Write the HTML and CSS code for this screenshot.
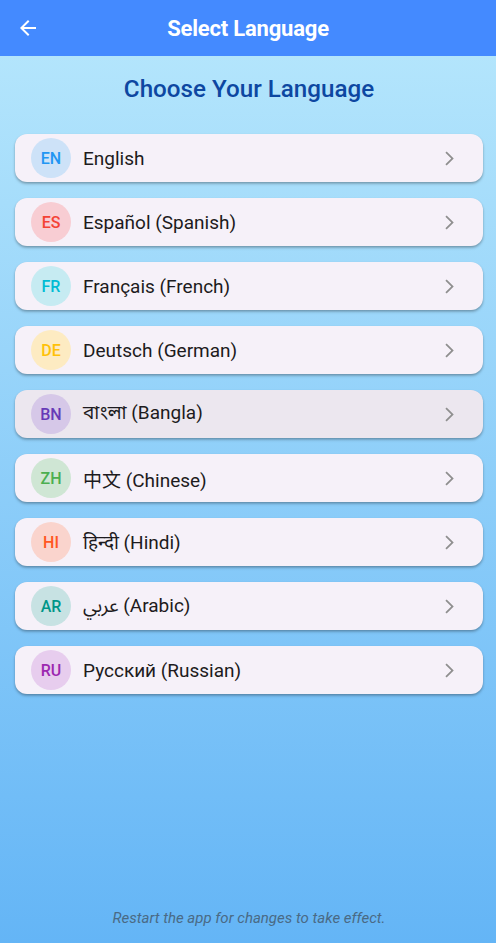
FILE: index.html
```html
<!DOCTYPE html>
<html>
<head>
<meta charset="utf-8">
<link rel="stylesheet" href="styles.css">
</head>
<body>
<div class="screen">
  <header class="appbar">
    <svg class="back" width="24" height="24" viewBox="0 0 24 24"><path d="M20 11H7.83l5.59-5.59L12 4l-8 8 8 8 1.41-1.41L7.83 13H20v-2z" fill="#fff"/></svg>
    <h1 class="appbar-title">Select Language</h1>
  </header>
  <main class="content">
    <h2 class="heading">Choose Your Language</h2>
    <ul class="list">
      <li class="item"><span class="avatar en">EN</span><span class="label">English</span><svg class="chev" viewBox="0 0 24 24"><path d="M6.23 20.23 8 22l10-10L8 2 6.23 3.77 14.46 12z"/></svg></li>
      <li class="item"><span class="avatar es">ES</span><span class="label">Español (Spanish)</span><svg class="chev" viewBox="0 0 24 24"><path d="M6.23 20.23 8 22l10-10L8 2 6.23 3.77 14.46 12z"/></svg></li>
      <li class="item"><span class="avatar fr">FR</span><span class="label">Français (French)</span><svg class="chev" viewBox="0 0 24 24"><path d="M6.23 20.23 8 22l10-10L8 2 6.23 3.77 14.46 12z"/></svg></li>
      <li class="item"><span class="avatar de">DE</span><span class="label">Deutsch (German)</span><svg class="chev" viewBox="0 0 24 24"><path d="M6.23 20.23 8 22l10-10L8 2 6.23 3.77 14.46 12z"/></svg></li>
      <li class="item active"><span class="avatar bn">BN</span><span class="label">বাংলা (Bangla)</span><svg class="chev" viewBox="0 0 24 24"><path d="M6.23 20.23 8 22l10-10L8 2 6.23 3.77 14.46 12z"/></svg></li>
      <li class="item"><span class="avatar zh">ZH</span><span class="label">中文 (Chinese)</span><svg class="chev" viewBox="0 0 24 24"><path d="M6.23 20.23 8 22l10-10L8 2 6.23 3.77 14.46 12z"/></svg></li>
      <li class="item"><span class="avatar hi">HI</span><span class="label">हिन्दी (Hindi)</span><svg class="chev" viewBox="0 0 24 24"><path d="M6.23 20.23 8 22l10-10L8 2 6.23 3.77 14.46 12z"/></svg></li>
      <li class="item"><span class="avatar ar">AR</span><span class="label">عربي (Arabic)</span><svg class="chev" viewBox="0 0 24 24"><path d="M6.23 20.23 8 22l10-10L8 2 6.23 3.77 14.46 12z"/></svg></li>
      <li class="item"><span class="avatar ru">RU</span><span class="label">Русский (Russian)</span><svg class="chev" viewBox="0 0 24 24"><path d="M6.23 20.23 8 22l10-10L8 2 6.23 3.77 14.46 12z"/></svg></li>
    </ul>
    <p class="note">Restart the app for changes to take effect.</p>
  </main>
</div>
</body>
</html>
```
FILE: styles.css
```css
* { box-sizing: border-box; }
html, body { margin: 0; padding: 0; }
body {
  font-family: Roboto, "Noto Sans", "Noto Sans CJK SC", sans-serif;
  width: 496px;
  height: 943px;
  overflow: hidden;
}
.screen {
  display: flex;
  flex-direction: column;
  height: 943px;
}
.appbar {
  height: 56px;
  flex: none;
  background: #448aff;
  display: flex;
  align-items: center;
  padding-left: 16px;
}
.back { width: 24px; height: 24px; }
.appbar-title {
  flex: 1;
  margin: 0;
  margin-right: 40px;
  text-align: center;
  color: #fff;
  font-size: 22px;
  font-weight: 700;
  letter-spacing: -0.2px;
}
.content {
  flex: 1;
  background: linear-gradient(to bottom, #b3e5fc 0%, #64b5f6 100%);
  display: flex;
  flex-direction: column;
  padding: 0 13px 0 15px;
}
.heading {
  margin: 18px 0 0;
  text-align: center;
  color: #0d47a1;
  font-size: 24.2px;
  font-weight: 500;
  line-height: 30px;
}
.list {
  list-style: none;
  margin: 30px 0 0;
  padding: 0;
  display: flex;
  flex-direction: column;
  gap: 16px;
}
.item {
  height: 48px;
  background: #f6f1f9;
  border-radius: 12px;
  box-shadow: 0 2px 3px rgba(0,0,0,0.22), 0 1px 2px rgba(0,0,0,0.12);
  display: flex;
  align-items: center;
  padding: 0 25px 0 16px;
}
.item.active { background: #ece7ef; }
.avatar {
  width: 40px;
  height: 40px;
  border-radius: 50%;
  display: flex;
  align-items: center;
  justify-content: center;
  font-size: 16px;
  font-weight: 500;
  flex: none;
}
.label {
  flex: 1;
  margin-left: 12px;
  font-size: 19px;
  font-weight: 400;
  color: #1d1b20;
  font-family: Roboto, "Noto Sans", "Noto Sans Bengali", "Noto Sans Devanagari", "Noto Sans Arabic", "DejaVu Sans", "Noto Sans CJK SC", sans-serif;
}
.chev { width: 17px; height: 17px; fill: #8f8f8f; }
.en { background: #cde2f8; color: #2196f3; }
.es { background: #f8cdd3; color: #f44336; }
.fr { background: #c6ebf2; color: #00bcd4; }
.de { background: #fdebc2; color: #ffc107; }
.bn { background: #d6c8e8; color: #673ab7; }
.zh { background: #cfe6d4; color: #4caf50; }
.hi { background: #fad4cd; color: #ff5722; }
.ar { background: #c7e2e3; color: #009688; }
.ru { background: #e7cdee; color: #9c27b0; }
.note {
  margin: auto 0 16px;
  text-align: center;
  font-style: italic;
  font-size: 15px;
  color: #4a6a85;
}
```
